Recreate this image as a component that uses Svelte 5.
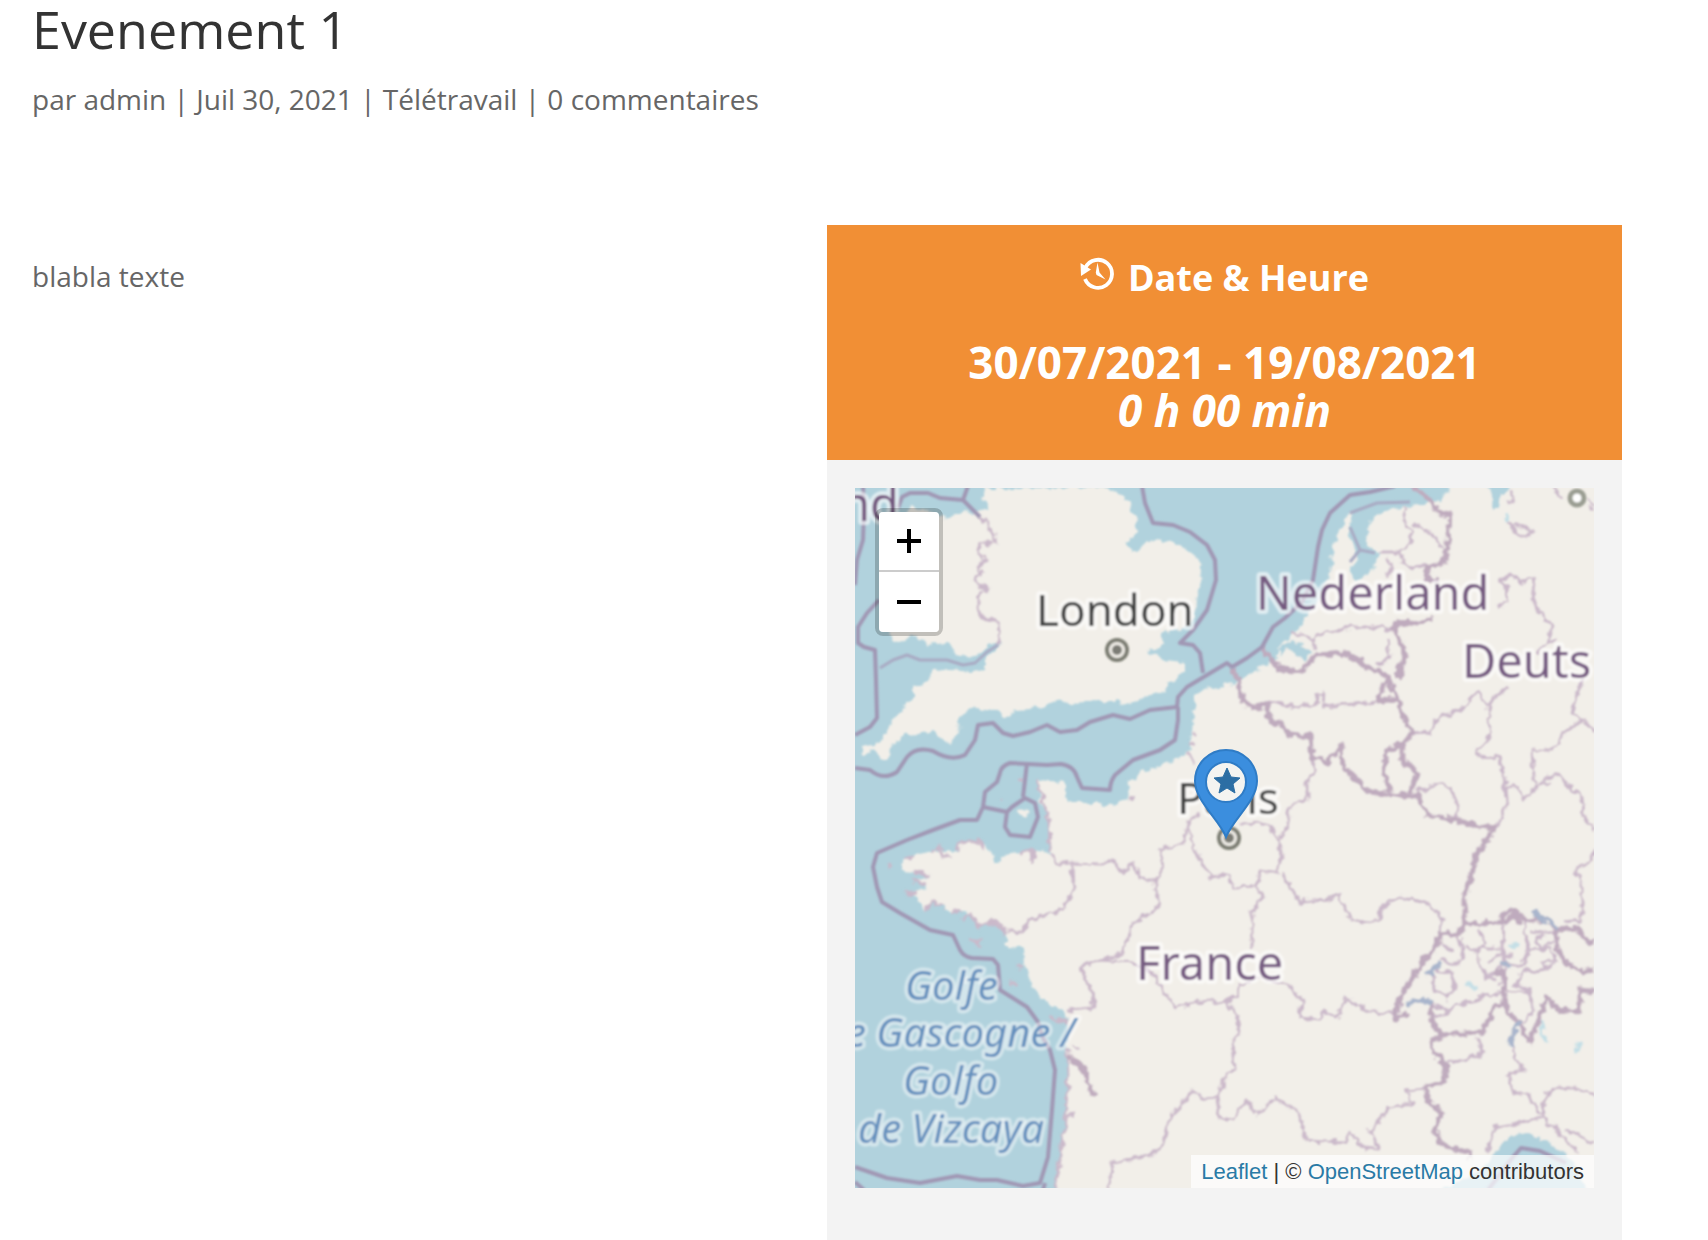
<script>
  const land = [
    // Great Britain
    'M985 488L983 500L990 508L978 513L960 512L947 518L935 514L925 510L915 507L900 516L895 560L898 600L888 632L895 641L905 640L915 635L927 645L947 643L957 655L970 660L987 648L1001 639L1000 645L985 658L985 670L973 672L950 670L932 671L928 683L913 687L913 698L893 720L880 743L862 747L863 755L875 750L882 760L889 757L890 747L905 735L933 733L950 743L960 733L958 720L966 712L977 708L997 710L1007 717L1017 709L1043 707L1057 700L1070 703L1100 701L1117 701L1130 705L1150 695L1165 692L1168 683L1185 673L1185 662L1163 660L1148 652L1163 645L1162 633L1187 627L1195 615L1196 600L1200 587L1201 567Q1200 558 1190 552L1173 542L1147 541L1140 548L1133 553L1125 543L1137 532L1135 515L1127 500L1111 488Z',
    // Continental coast
    'M1600 480L1450 480L1448 490L1440 500L1417 505L1403 508L1383 510L1370 520L1367 537L1367 547L1378 552L1375 567L1360 580L1352 578L1350 567L1358 560L1354 545L1349 535L1352 513L1347 516L1340 530L1333 547L1330 573L1318 602L1300 627L1290 635L1277 648L1277 660L1267 663L1253 672L1237 682L1207 688L1195 697L1193 723L1190 750L1180 758L1143 772L1128 783L1127 798L1113 807L1098 803L1067 803L1063 782L1037 780L1040 800L1048 817L1050 853L1033 850L1010 853L998 863L990 850L980 840L962 842L957 852L933 850L917 855L903 860L903 872L917 873L930 877L914 881L927 888L909 893L917 897L925 912L933 902L950 910L970 915L980 927L993 923L1007 932L1007 947L1023 948L1024 966L1033 987L1040 998L1063 1010L1068 1022L1067 1050L1068 1070L1065 1120L1060 1160L1055 1195L1600 1195Z'
  ];

  const inlandWater = [
    'M1488 484L1509 484L1506 494L1500 494L1498 508L1492 508L1493 497Z',
    'M1437 1192L1477 1173L1493 1155L1503 1143L1520 1132L1540 1138L1563 1153L1577 1167L1588 1192Z',
    'M1277 650L1290 640L1300 645L1312 652L1305 661L1296 652L1284 647L1281 658Z'
  ];

  const islets = ['M1018 809L1028 812L1025 817L1017 813Z', 'M1284 650L1296 655L1301 661L1284 659Z'];

  const seaBorders = [
    'M863 486L864 510L863 540L857 560L855 585',
    'M879 600L867 613L858 627L858 643L864 647L875 650L876 680L877 718L870 727L855 735',
    'M980 517L963 500L968 486M963 500L940 498L928 493L910 493L902 497L898 508',
    'M855 768L870 770Q883 781 897 772L907 757Q916 746 933 751Q951 762 965 755L975 740L978 725L993 723L1003 733L1013 736L1030 732L1047 725L1060 732L1077 730L1090 722L1113 715L1130 719L1150 710L1177 707L1178 697L1187 687L1207 675L1227 663L1232 667L1247 658L1262 647L1273 627L1285 618L1302 602L1313 580L1318 547L1322 530L1330 513L1350 495L1370 492L1395 486',
    'M1142 486L1145 503L1153 523L1173 525L1190 532L1207 545L1215 560L1216 580L1207 610L1193 630L1180 643L1193 645L1200 653L1203 673',
    'M1178 707L1178 720L1175 740L1160 750L1133 760L1115 775Q1110 782 1110 790L1082 788L1077 777Q1074 766 1061 764L1047 765L1010 763Q1001 766 1000 773L997 782L985 792L983 807L977 820L960 820L933 830L907 840L877 853L873 867L877 887L882 902L900 913L930 930L953 935L960 950Q964 957 972 958L993 959L998 965L1000 990L1027 1007L1038 1022L1043 1038L1050 1050L1055 1070L1052 1110L1048 1157L1040 1183L1023 1186L997 1180L980 1180L957 1176L920 1183L887 1178L855 1167',
    'M1027 763L1023 797M983 807L1007 812L1005 827L1010 835L1030 837L1038 817L1035 803L1025 798L1012 807L1007 812',
    'M1043 1190L1045 1183M855 1182L864 1190',
    'M1488 1190L1513 1157L1521 1148L1540 1151L1566 1163'
  ];

  const faintSeaBorders = [
    'M880 668L893 660L907 655L920 660L947 660L963 665L975 663L987 652L998 645',
    'M1350 513L1377 503L1410 502M1350 527L1360 550L1375 553M1360 550L1350 562'
  ];

  const thickBorders = [
    'M1413 486L1430 500L1440 513L1450 515L1448 543L1443 563L1428 568L1427 578L1440 580',
    'M1232 667L1238 680L1242 697L1250 708L1267 705L1269 720L1283 725L1290 735L1310 737L1312 757L1327 762L1342 745L1343 770L1350 773L1370 792L1393 795L1417 795L1427 815L1457 820L1473 825L1495 828L1477 853L1472 873L1465 893L1465 925L1458 935L1440 933L1435 950L1423 960L1413 977L1400 997L1395 1020L1408 1013',
    'M1402 745L1388 750L1383 767L1390 792M1402 745L1402 760L1418 773L1410 793M1402 745L1412 732L1405 720L1397 700L1378 702L1387 677L1355 660L1348 653L1317 655L1300 672L1277 668L1273 660L1262 647M1387 677L1397 699M1398 680L1405 653L1393 627L1400 622L1417 624L1432 618',
    'M1465 925L1500 923L1502 915L1512 910L1527 920L1547 920L1557 930L1577 928L1588 942L1594 943M1500 915L1506 922L1513 915L1522 923',
    'M1432 1003L1432 1022L1442 1035L1465 1033L1482 1033L1493 1010L1505 1000L1508 1013L1520 1023L1530 1042L1542 1010L1547 997L1558 1010L1580 1012L1580 990L1594 992',
    'M1442 1037L1432 1040L1433 1050L1447 1067L1443 1082L1425 1088L1428 1100L1442 1113L1435 1130L1440 1143L1457 1151L1472 1150L1470 1160',
    'M1557 930L1557 948L1566 962L1582 972L1594 970M1505 1000L1504 975L1495 970',
    'M1068 1056L1080 1065L1086 1074L1089 1086L1093 1097'
  ];

  const thinBorders = [
    'M998 645L1000 623L983 617L978 608L980 593L986 590L983 585L975 580L980 567L987 560L978 552L980 543L997 543L992 533L987 523L980 517',
    'M979 588L986 585M979 577L985 571M982 563L988 560',
    'M1405 508L1403 523L1412 530L1410 543L1400 552L1378 552M1400 552L1402 562L1413 567L1428 565M1413 523L1430 532L1442 547M1387 557L1392 567L1387 577',
    'M1497 608L1508 602L1505 583L1498 580L1513 575L1523 583L1535 577L1532 600L1540 613L1552 627L1547 643L1558 640M1547 643L1536 655',
    'M1507 523L1517 525L1532 532L1527 538L1517 533L1511 525M1512 490L1513 500L1508 502M1553 488L1563 498M1587 500L1594 508',
    'M1290 632L1313 638L1350 627L1377 627L1393 630M1313 638L1316 650M1388 640L1390 657L1377 665',
    'M1267 703L1300 707L1318 703L1316 695L1324 693L1323 707L1343 705L1377 702',
    'M1435 720L1460 710L1477 692L1487 707L1492 700L1508 687M1492 700L1488 720L1490 737L1475 753L1487 759L1498 757L1505 777L1507 800L1502 820L1495 828',
    'M1505 788L1515 785L1523 800L1535 790L1532 750L1553 750L1563 733L1583 720L1594 730M1535 790L1547 777L1560 775L1570 788L1582 795L1583 817L1594 830M1594 850L1590 862L1575 870L1582 887L1582 920L1563 922',
    'M1583 680L1577 693L1572 713L1583 720M1412 733L1430 732L1438 720M1417 792L1438 783L1450 788L1457 803L1455 820',
    'M1541 785L1552 782M1565 782L1573 790M1580 795L1584 810',
    'M1477 1038L1482 1053L1463 1060L1447 1063M1510 1037L1515 1057L1523 1070L1508 1075L1513 1092L1527 1095L1542 1115L1547 1092L1557 1088L1577 1088L1594 1095',
    'M1487 1152L1495 1128L1530 1120L1543 1118L1557 1130L1577 1152M1567 1130L1594 1143M1425 1088L1405 1090L1412 1103L1390 1108L1370 1130L1378 1148L1363 1147L1350 1133L1345 1142L1307 1140L1298 1110L1287 1105L1275 1098L1257 1115L1245 1100L1233 1119L1220 1119L1217 1097L1203 1098L1192 1092L1167 1123L1162 1148L1143 1157L1112 1163L1110 1188',
    'M1217 1097L1227 1073L1235 1070L1233 1040L1239 1030L1237 1015L1225 1003L1207 1000L1175 1007L1162 988L1150 970L1133 963L1100 960L1080 967L1092 990L1093 1008L1068 1010',
    'M1225 1003L1238 995L1240 985L1257 978L1287 983L1302 1000L1300 1018L1318 1020L1323 1012L1337 1017L1345 997L1370 1012L1395 1013',
    'M1050 853L1058 863L1070 863L1100 864L1113 860L1122 872L1133 863L1140 877L1155 882L1158 907L1132 925L1123 953L1100 960M1072 863L1073 893L1063 910L1027 920L1023 932L1007 932',
    'M1155 882L1163 867L1160 850L1183 843L1188 823L1200 813M1188 830L1197 853L1210 877L1230 875L1233 888L1257 887L1260 872L1277 872L1282 853L1275 833L1263 823L1240 824',
    'M1257 887L1263 897L1252 913L1252 950M1282 873L1300 902L1327 900L1338 895L1350 918L1363 923L1378 920L1383 907L1398 897L1427 903L1442 917L1440 933M1280 840L1287 827L1290 807L1307 798L1307 783L1315 770L1312 757',
    'M1187 753L1197 763M1193 731L1196 733M1190 743L1195 744M1128 798L1136 799',
    'M905 858L915 857M932 850L940 846L942 856L950 856M957 852L960 842L980 840L985 850M1020 853L1031 850L1032 863L1034 850M914 872L930 876M907 893L918 893M925 911L933 902L944 907M950 910L961 913M962 920L970 913L979 927L993 921L1002 925L1006 935M970 940L977 943L982 939M888 866L891 865M1017 964L1022 968M1010 984L1016 984M1001 798L1004 799M1018 779L1024 780M1037 780L1043 799L1049 820L1050 850M1049 1016L1067 1024M1072 1046L1076 1050M1064 1114L1073 1116',
    'M915 872L928 873M913 880L926 886M975 840L982 848M906 890L914 895M990 922L1006 930M972 942L980 945M1067 1050L1068 1075L1065 1120L1060 1160L1056 1190',
    'M1458 935L1463 950L1459 965L1440 960M1478 930L1485 942L1478 952L1466 947M1479 948L1479 960L1485 975L1497 980M1503 925L1502 948L1480 948M1527 920L1524 935L1530 950L1522 965L1502 962L1495 973L1484 978M1530 932L1555 932M1555 940L1540 948L1537 938L1545 935M1530 950L1550 948L1557 962L1542 972L1525 970L1515 984L1530 990L1533 1010L1524 1024M1502 948L1506 965L1500 985M1440 945L1456 950M1435 970L1450 972L1455 988L1447 998L1434 988L1432 970M1433 1006L1448 1010L1455 1005L1478 1000L1485 995L1505 992L1530 992M1448 1010L1444 1017L1434 1016M1545 972L1543 962L1556 960M1490 962L1497 955L1512 956'
  ];

  const lakes = [
    'M1405 1006L1412 1001L1422 1000L1433 1003',
    'M1427 974L1434 970L1440 963',
    'M1534 911L1540 918L1550 922L1559 930',
    'M1520 1022L1512 1033L1511 1047',
    'M1500 962L1511 966'
  ];
  const paleLakes = ['M1468 983L1475 989', 'M1542 1021L1542 1034L1547 1041', 'M1579 1041L1577 1053', 'M1507 513L1507 521', 'M1510 944L1518 948'];

  const labels = [
    { text: 'nd', x: 841, y: 521, kind: 'country' },
    { text: 'London', x: 1036, y: 626, kind: 'city' },
    { text: 'Nederland', x: 1256, y: 610, kind: 'country' },
    { text: 'Deuts', x: 1462, y: 678, kind: 'country' },
    { text: 'Paris', x: 1177, y: 814, kind: 'city' },
    { text: 'France', x: 1136, y: 980, kind: 'country' },
    { text: 'Golfe', x: 905, y: 1000, kind: 'water' },
    { text: 'e Gascogne /', x: 846, y: 1047, kind: 'water' },
    { text: 'Golfo', x: 903, y: 1095, kind: 'water' },
    { text: 'de Vizcaya', x: 858, y: 1143, kind: 'water' }
  ];

  const capitals = [
    { x: 1117, y: 650 },
    { x: 1229, y: 838 }
  ];
</script>

<div class="page">
  <header>
    <h1>Evenement 1</h1>
    <p class="meta">par <a href="#admin">admin</a> | Juil 30, 2021 | <a href="#teletravail">Télétravail</a> | <a href="#commentaires">0 commentaires</a></p>
  </header>

  <main>
    <article><p>blabla texte</p></article>

    <aside>
      <section class="when">
        <h2>
          <svg class="clock" viewBox="0 0 34 34" aria-hidden="true">
            <path d="M5.5 11.5A14 14 0 1 1 5 23" fill="none" stroke="#fff" stroke-width="3.8" />
            <path d="M0.5 7L11 13.5L1 20Z" fill="#fff" />
            <path d="M17.5 6.5L19.5 16.5L25.5 23.5L16.5 19L15.8 16.5Z" fill="#fff" />
          </svg>
          Date &amp; Heure
        </h2>
        <p class="dates">30/07/2021 - 19/08/2021<br /><em>0 h 00 min</em></p>
      </section>

      <div class="map">
        <svg class="tiles" viewBox="855 488 739 700" preserveAspectRatio="xMidYMid slice" role="img" aria-label="Carte">
          <defs>
            <filter id="coast" filterUnits="userSpaceOnUse" x="845" y="478" width="760" height="720">
              <feTurbulence type="fractalNoise" baseFrequency="0.13" numOctaves="2" seed="4" />
              <feDisplacementMap in="SourceGraphic" scale="9" xChannelSelector="R" yChannelSelector="G" />
              <feGaussianBlur stdDeviation="1" />
            </filter>
            <filter id="soft" filterUnits="userSpaceOnUse" x="845" y="478" width="760" height="720">
              <feGaussianBlur stdDeviation="1" />
            </filter>
          </defs>
          <rect class="sea" x="845" y="478" width="760" height="720" />
          <g filter="url(#coast)">
            {#each land as d}<path class="land" {d} />{/each}
            {#each inlandWater as d}<path class="sea" {d} />{/each}
            {#each islets as d}<path class="land" {d} />{/each}
            {#each paleLakes as d}<path class="pale-lake" {d} />{/each}
            {#each thinBorders as d}<path class="thin" {d} />{/each}
            {#each thickBorders as d}<path class="thick" {d} />{/each}
            {#each lakes as d}<path class="lake" {d} />{/each}
          </g>
          <g filter="url(#soft)">
            {#each seaBorders as d}<path class="maritime" {d} />{/each}
            {#each faintSeaBorders as d}<path class="maritime faint" {d} />{/each}
            {#each capitals as c}
              <circle class="ring" cx={c.x} cy={c.y} r="10" />
              <circle class="dot" cx={c.x} cy={c.y} r="5" />
            {/each}
            <circle class="town" cx="1577" cy="498" r="7" />
            {#each labels as l}<text class={l.kind} x={l.x} y={l.y}>{l.text}</text>{/each}
          </g>
          <g>
            <path class="pin" d="M1226 837C1219 819 1195 801 1195 781A31 31 0 0 1 1257 781C1257 801 1233 819 1226 837Z" />
            <circle class="pin-eye" cx="1226" cy="782" r="20" />
            <path class="star" d="M1227 768L1231 777L1240 778L1233 784L1235 793L1227 788L1219 793L1221 784L1214 778L1223 777Z" />
          </g>
        </svg>

        <div class="zoom">
          <button type="button" aria-label="Zoom in"><svg viewBox="0 0 24 24"><path d="M0 12H24M12 0V24" /></svg></button>
          <button type="button" aria-label="Zoom out"><svg viewBox="0 0 24 24"><path d="M0 12H24" /></svg></button>
        </div>

        <div class="attribution"><a href="#leaflet">Leaflet</a> | © <a href="#openstreetmap">OpenStreetMap</a> contributors</div>
      </div>
    </aside>
  </main>
</div>

<style>
  :global(body) {
    background: #fff;
  }
  .page {
    box-sizing: border-box;
    padding: 0 86px 0 32px;
    font-family: 'Open Sans', 'Noto Sans', sans-serif;
    font-size: 28px;
    line-height: 48px;
    color: #666;
  }
  h1,
  h2,
  p {
    margin: 0;
  }
  h1 {
    font-size: 52px;
    line-height: 58px;
    font-weight: 400;
    color: #333;
  }
  .meta {
    margin-top: 17px;
  }
  .meta a {
    color: inherit;
    text-decoration: none;
  }
  main {
    display: grid;
    grid-template-columns: 1fr 1fr;
    margin-top: 102px;
  }
  article {
    padding-top: 27px;
  }
  aside {
    background: #f3f3f3;
    padding-bottom: 52px;
  }
  .when {
    padding: 35px 28px 26px;
    background: #f18f35;
    color: #fff;
    font-weight: 700;
    text-align: center;
  }
  h2 {
    display: flex;
    justify-content: center;
    gap: 14px;
    font-size: 36px;
    line-height: 36px;
  }
  .clock {
    width: 34px;
    height: 34px;
    margin-top: -4px;
  }
  .dates {
    margin-top: 42px;
    font-size: 44px;
    line-height: 48px;
  }
  .map {
    position: relative;
    height: 700px;
    margin: 28px 28px 0;
    overflow: hidden;
  }
  .tiles {
    display: block;
    width: 100%;
    height: 100%;
  }
  .sea {
    fill: #b1d2dd;
  }
  .land {
    fill: #f2efe9;
  }
  .thin,
  .thick,
  .maritime,
  .lake,
  .pale-lake {
    fill: none;
    stroke-linejoin: round;
  }
  .thin {
    stroke: #cbb9ca;
    stroke-width: 3;
  }
  .thick {
    stroke: #bfabbe;
    stroke-width: 5;
  }
  .maritime {
    stroke: #a097b4;
    stroke-width: 4;
  }
  .faint {
    stroke: #a9aac3;
    stroke-width: 3;
  }
  .lake {
    stroke: #a9b5cc;
    stroke-width: 5;
  }
  .pale-lake {
    stroke: #c5dfe6;
    stroke-width: 4;
  }
  .ring {
    fill: #f2efe9;
    stroke: #7b7d72;
    stroke-width: 4;
  }
  .dot {
    fill: #7b7c75;
  }
  .town {
    fill: #fff;
    stroke: #9a9d92;
    stroke-width: 5;
  }
  text {
    font-family: 'Noto Sans', sans-serif;
    font-size: 44px;
    paint-order: stroke;
    stroke: rgba(255, 255, 255, 0.6);
    stroke-width: 8px;
    stroke-linejoin: round;
  }
  .city {
    fill: #404140;
  }
  .country {
    fill: #755a80;
    font-size: 47px;
  }
  .water {
    fill: #6590bd;
    font-size: 40px;
    font-style: italic;
    stroke: rgba(255, 255, 255, 0.45);
    stroke-width: 7px;
  }
  .pin {
    fill: #3b8ede;
    stroke: #2f7cc6;
    stroke-width: 2;
  }
  .pin-eye {
    fill: #f4f4f1;
    stroke: #2f7cc6;
    stroke-width: 2;
  }
  .star {
    fill: #2c6ea4;
    stroke: #2c6ea4;
    stroke-width: 1;
  }
  .zoom {
    position: absolute;
    top: 20px;
    left: 20px;
    width: 60px;
    border: 4px solid rgba(0, 0, 0, 0.2);
    border-radius: 8px;
    background-clip: padding-box;
  }
  .zoom button {
    display: flex;
    align-items: center;
    justify-content: center;
    box-sizing: border-box;
    width: 100%;
    height: 60px;
    padding: 0;
    border: 0;
    background: #fff;
    border-radius: 0 0 4px 4px;
  }
  .zoom button:first-child {
    border-bottom: 2px solid #ccc;
    border-radius: 4px 4px 0 0;
  }
  .zoom svg {
    width: 24px;
    height: 24px;
  }
  .zoom path {
    fill: none;
    stroke: #000;
    stroke-width: 4;
  }
  .attribution {
    position: absolute;
    right: 0;
    bottom: 0;
    padding: 0 10px;
    background: rgba(255, 255, 255, 0.7);
    color: #333;
    font-family: 'Liberation Sans', sans-serif;
    font-size: 22px;
    line-height: 33px;
    white-space: nowrap;
  }
  .attribution a {
    color: #2a7aa6;
    text-decoration: none;
  }
</style>
